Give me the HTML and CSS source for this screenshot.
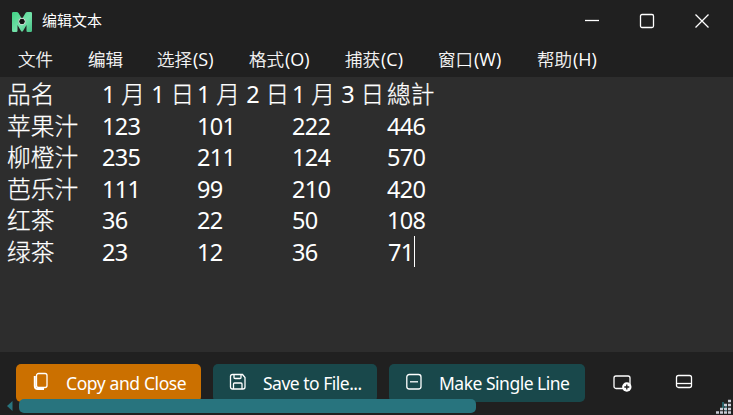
FILE: index.html
```html
<!DOCTYPE html>
<html lang="zh-CN">
<head>
<meta charset="utf-8">
<title>编辑文本</title>
<link rel="stylesheet" href="styles.css">
</head>
<body>
<div class="window">
  <header class="titlebar">
    <svg class="logo" width="22" height="22" viewBox="0 0 22 22">
      <defs><linearGradient id="leaf" x1="0" y1="0" x2="1" y2="1"><stop offset="0" stop-color="#3fd184"/><stop offset=".55" stop-color="#74e2aa"/><stop offset="1" stop-color="#45bd83"/></linearGradient></defs>
      <path d="M1 2.200Q1 1 2.200 1H5.500Q7 1 7.500 2L11 8l3.500-6Q15 1 16.500 1h3.300Q21 1 21 2.200v17.600q0 1.200-1.200 1.200h-3.100Q15.500 21 15.500 19.800V14L12 20q-1 1.500-2 0L6.500 14v5.800Q6.500 21 5.300 21H2.200Q1 21 1 19.800Z" fill="url(#leaf)"/>
      <circle cx="11" cy="10.500" r="3.300" fill="#111" stroke="#d9e8df" stroke-width="1"/>
    </svg>
    <span class="title">编辑文本</span>
    <div class="controls">
      <svg width="16" height="16" viewBox="0 0 16 16"><path d="M1 7.500h14"/></svg>
      <svg width="16" height="16" viewBox="0 0 16 16"><rect x="1.500" y="1.500" width="13" height="13" rx="1.500"/></svg>
      <svg width="16" height="16" viewBox="0 0 16 16"><path d="M1.500 1.500l13 13M14.500 1.500l-13 13"/></svg>
    </div>
  </header>
  <nav class="menu">
    <span>文件</span><span>编辑</span><span>选择<i>(S)</i></span><span>格式<i>(O)</i></span><span>捕获<i>(C)</i></span><span>窗口<i>(W)</i></span><span>帮助<i>(H)</i></span>
  </nav>
  <main class="editor">
    <div class="row head"><span>品名</span><span><i>1 </i>月<i> 1 </i>日</span><span><i>1 </i>月<i> 2 </i>日</span><span><i>1 </i>月<i> 3 </i>日</span><span>總計</span></div>
    <div class="row"><span>苹果汁</span><i>123</i><i>101</i><i>222</i><i>446</i></div>
    <div class="row"><span>柳橙汁</span><i>235</i><i>211</i><i>124</i><i>570</i></div>
    <div class="row"><span>芭乐汁</span><i>111</i><i>99</i><i>210</i><i>420</i></div>
    <div class="row"><span>红茶</span><i>36</i><i>22</i><i>50</i><i>108</i></div>
    <div class="row"><span>绿茶</span><i>23</i><i>12</i><i>36</i><i class="active">71<b class="caret"></b></i></div>
  </main>
  <footer class="actions">
    <button class="btn copy">
      <svg width="18" height="20" viewBox="0 0 18 20"><path d="M2.800 4v10q0 3 3 3H12" stroke-width="2"/><rect x="4.500" y="1.500" width="10.500" height="14" rx="2"/></svg>
      <span>Copy and Close</span>
    </button>
    <button class="btn save">
      <svg width="18" height="20" viewBox="0 0 18 20"><path d="M3.500 2.500h10l2.500 3v9.500q0 2-2 2H3.500q-2 0-2-2V4.500q0-2 2-2M5 2.500v3q0 1 1 1h5q1 0 1-1v-3M4.500 17v-5q0-1 1-1h6.500q1 0 1 1v5"/></svg>
      <span>Save to File...</span>
    </button>
    <button class="btn single">
      <svg width="18" height="20" viewBox="0 0 18 20"><rect x="1.800" y="2.500" width="14.200" height="14.500" rx="2.500"/><path d="M5 9.800h8"/></svg>
      <span>Make Single Line</span>
    </button>
    <svg class="tool add" width="20" height="20" viewBox="0 0 20 20"><rect x="2" y="3" width="16" height="12.500" rx="2"/><circle cx="14.800" cy="14" r="4.700" fill="#fff" stroke="none"/><path d="M12.300 14h5M14.800 11.500v5" stroke="#202020"/></svg>
    <svg class="tool panel" width="20" height="20" viewBox="0 0 20 20"><rect x="2.500" y="3.500" width="15" height="12" rx="2"/><path d="M2.500 11.500h15"/></svg>
    <div class="scroll">
      <svg width="6" height="10" viewBox="0 0 6 10"><path d="M5.500 0v10L0 5Z"/></svg>
      <div class="thumb"></div>
    </div>
    <svg class="grip" width="15" height="15" viewBox="0 0 15 15"><path d="M7 3v7M10 5v7" stroke="#28747e" stroke-width="1.500"/><path d="M12 2h3M8 6h3M12 6h3M4 10h3M8 10h3M12 10h3M0 13.500h3M4 13.500h3M8 13.500h3M12 13.500h3" stroke="#c9ccd6" stroke-width="2.500"/></svg>
  </footer>
</div>
</body>
</html>
```
FILE: styles.css
```css
* { box-sizing: border-box; }
body {
  margin: 0;
  background: #202020;
  color: #fff;
  font-family: "Noto Sans", "Noto Sans CJK SC", sans-serif;
  overflow: hidden;
}
i { font-style: normal; }
svg { display: block; flex: none; fill: none; stroke: #fff; stroke-width: 1.3; }
.window { height: 415px; display: flex; flex-direction: column; }
.titlebar { height: 42px; display: flex; align-items: center; padding-left: 11px; flex: none; }
.logo { stroke: none; margin-top: 1px; }
.title { font: 15px/20px "Noto Sans CJK SC", sans-serif; margin-left: 9px; margin-top: -3px; }
.controls { display: flex; gap: 39px; margin-left: auto; margin-right: 23px; }
.menu {
  height: 35px;
  flex: none;
  display: grid;
  grid-template-columns: 70px 69px 92px 96px 93px 99px auto;
  padding-left: 18px;
  font: 300 17.500px/34px "Noto Sans CJK SC", sans-serif;
  -webkit-text-stroke: 0.250px #fff;
  white-space: nowrap;
}
.menu i { font-family: "Open Sans", sans-serif; font-weight: 400; font-size: 18px; letter-spacing: 0; margin-left: 1px; -webkit-text-stroke: 0; }
.editor { height: 275px; flex: none; background: #2d2d2d; padding: 2px 0 0 7px; font-size: 23.700px; font-weight: 300; -webkit-text-stroke: 0.250px #fff; }
.row {
  display: grid;
  grid-template-columns: 95px 95px 95px 95px 95px;
  height: 31.600px;
  line-height: 31px;
  white-space: nowrap;
}
.row i { font-weight: 400; font-size: 23.500px; letter-spacing: -0.700px; -webkit-text-stroke: 0; }
.head { word-spacing: 1px; }
.active { position: relative; padding-left: 1px; }
.caret { position: absolute; left: 27px; top: -1px; width: 1px; height: 31px; background: #fff; }
.actions { flex: 1; position: relative; display: flex; align-items: flex-start; padding: 12px 0 0 16px; }
.btn {
  height: 38px;
  display: flex;
  align-items: center;
  border: 0;
  border-radius: 5px;
  padding: 0 0 0 16px;
  margin-right: 12px;
  background: #19484b;
  color: #fff;
  font: 17.500px/38px "Noto Sans", sans-serif;
  white-space: nowrap;
}
.btn svg { margin-top: -2px; }
.btn span { margin-left: 16px; }
.copy { width: 185px; background: #cb7000; letter-spacing: -0.400px; }
.save { width: 164px; letter-spacing: -0.500px; }
.single { width: 196px; letter-spacing: -0.500px; }
.add { margin: 9px 0 0 15px; }
.panel { margin: 8px 0 0 42px; }
.scroll { position: absolute; left: 7px; top: 47px; display: flex; align-items: center; gap: 6px; height: 14px; }
.scroll svg { fill: #28747e; stroke: none; }
.thumb { width: 457px; height: 14px; border-radius: 5px; background: #28747e; }
.grip { position: absolute; right: 2px; bottom: 1px; }
```
